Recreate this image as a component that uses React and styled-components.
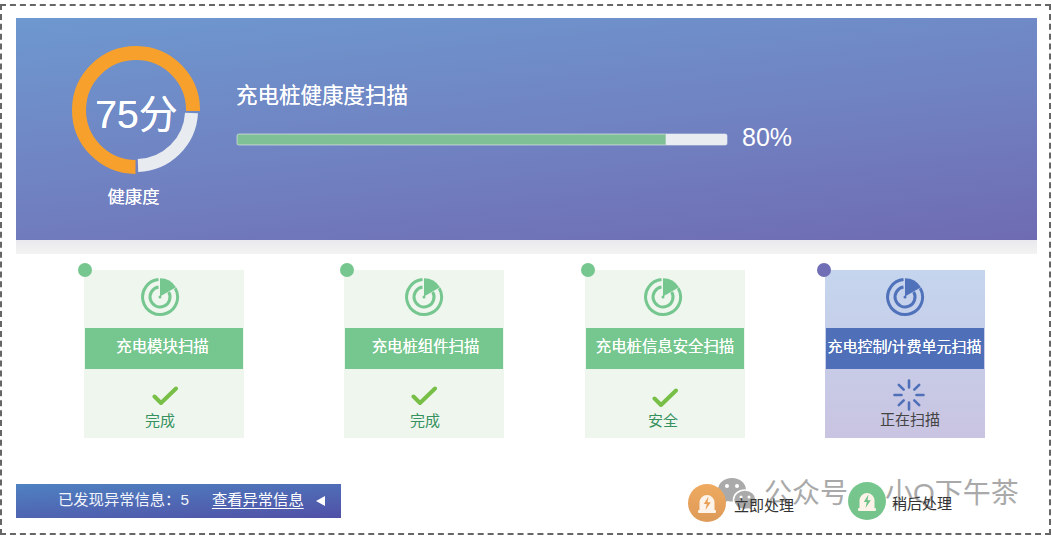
import React from "react"
import styled, { createGlobalStyle } from "styled-components"

const GlobalStyle = createGlobalStyle`
  html, body {
    margin: 0;
    padding: 0;
    background: #fff;
    overflow: hidden;
  }
  body {
    font-family: "Liberation Sans", "Noto Sans CJK SC", sans-serif;
  }
`

const Frame = styled.div`
  position: relative;
  box-sizing: border-box;
  width: 1051px;
  height: 531px;
  margin-top: 4px;
  padding: 12px 12px 0 14px;
  border: 2px dashed #666;
`

const Hero = styled.section`
  display: flex;
  box-sizing: border-box;
  height: 222px;
  padding: 28px 0 0 56px;
  background: linear-gradient(174deg, #6e98cf 0%, #7083c2 50%, #6f6bb2 100%);
`

const Gauge = styled.div`
  position: relative;
  width: 128px;
  flex: none;
`

const GaugeScore = styled.div`
  position: absolute;
  top: 42px;
  left: 0;
  width: 129px;
  text-align: center;
  color: #fff;
  font-size: 39px;
  line-height: 54px;
  text-shadow: 0 0 0.5px #fff;
`

const GaugeLabel = styled.div`
  margin-top: 9px;
  padding-right: 5px;
  text-align: center;
  color: #fff;
  font-size: 17.4px;
  line-height: 28px;
  text-shadow: 0 0 0.5px #fff;
`

const ScanPanel = styled.div`
  margin: 35px 0 0 36px;
`

const ScanTitle = styled.div`
  color: #fff;
  font-size: 21.5px;
  line-height: 30px;
  text-shadow: 0 0 0.6px #fff;
`

const ProgressRow = styled.div`
  display: flex;
  align-items: center;
  height: 28px;
  margin-top: 14px;
  padding-left: 1px;
`

const ProgressTrack = styled.div`
  box-sizing: border-box;
  width: 490px;
  height: 11px;
  border-radius: 2px;
  background: #e9edf1;
  box-shadow: 0 0 0 0.5px #b9c3dc;
  overflow: hidden;
`

const ProgressFill = styled.div`
  box-sizing: border-box;
  height: 100%;
  background: #7fc096;
  border: 1px solid #a5cdb4;
`

const ProgressValue = styled.div`
  margin: 0 0 4px 15px;
  color: #fff;
  font-size: 25px;
`

const Strip = styled.div`
  height: 14px;
  background: linear-gradient(#e9e9ee, #f3f3f3);
`

const CardRow = styled.div`
  display: flex;
  padding-top: 16px;
`

const Card = styled.article`
  position: relative;
  display: flex;
  flex-direction: column;
  align-items: center;
  box-sizing: border-box;
  width: 160px;
  height: 168px;
  margin-left: ${p => p.$offset}px;
  padding: 0 1px;
  background: ${p => (p.$active ? "linear-gradient(#c5d5ee, #c9c4e1)" : "#eff6ee")};
`

const CardDot = styled.span`
  position: absolute;
  top: -7px;
  left: ${p => p.$left}px;
  width: 14px;
  height: 14px;
  border-radius: 50%;
  background: ${p => (p.$active ? "#706fb5" : "#76c78f")};
`

const RadarIcon = styled.svg`
  display: block;
  flex: none;
  width: 40px;
  height: 40px;
  margin-top: 7px;
  margin-left: ${p => p.$shift * 2}px;
  color: ${p => (p.$active ? "#4f72bb" : "#76c78f")};
`

const CardBanner = styled.div`
  box-sizing: border-box;
  width: 100%;
  height: 41px;
  margin-top: 11px;
  padding-left: ${p => (p.$shift > 0 ? p.$shift * 2 : 0)}px;
  padding-right: ${p => (p.$shift < 0 ? -p.$shift * 2 : 0)}px;
  background: ${p => (p.$active ? "#4f70b8" : "#76c78f")};
  color: #fff;
  font-size: ${p => (p.$small ? "15px" : "15.4px")};
  line-height: 38px;
  text-align: center;
  white-space: nowrap;
  text-shadow: 0 0 0.6px #fff;
`

const StatusIcon = styled.svg`
  display: block;
  flex: none;
  margin-top: ${p => p.$top}px;
  margin-left: ${p => p.$shift * 2}px;
`

const StatusText = styled.div`
  margin-top: ${p => p.$top}px;
  margin-left: ${p => p.$shift * 2}px;
  color: ${p => (p.$active ? "#444" : "#35925f")};
  font-size: 15px;
  line-height: 20px;
`

const Footer = styled.footer`
  position: relative;
  display: flex;
  justify-content: space-between;
  margin-top: 46px;
`

const AlertBar = styled.div`
  display: flex;
  align-items: center;
  box-sizing: border-box;
  width: 325px;
  height: 34px;
  padding: 0 0 7px 42px;
  background: linear-gradient(176deg, #4f82c2, #5050a6);
  color: #f2f5fb;
  font-size: 15.3px;
`

const AlertLink = styled.a`
  margin-left: 23px;
  color: #fff;
  text-decoration: underline;
  text-underline-offset: 3px;
`

const AlertArrow = styled.span`
  width: 0;
  height: 0;
  margin: 7px 0 0 12px;
  border-top: 5px solid transparent;
  border-bottom: 5px solid transparent;
  border-right: 9px solid #fff;
`

const Watermark = styled.div`
  position: absolute;
  top: -7px;
  left: 701px;
  display: flex;
  align-items: center;
  gap: 7px;
  color: #a9a9a9;
  font-size: 28px;
  line-height: 34px;
  word-spacing: 6px;
  white-space: nowrap;
`

const Actions = styled.div`
  position: relative;
  z-index: 1;
  display: flex;
  padding-right: 85px;
`

const ActionItem = styled.div`
  display: flex;
  align-items: center;
  height: 38px;
  margin-top: ${p => p.$top}px;
  margin-left: ${p => p.$left}px;
`

const ActionBadge = styled.svg`
  display: block;
  flex: none;
  width: 38px;
  height: 38px;
`

const ActionText = styled.span`
  margin: 2px 0 0 ${p => p.$gap}px;
  color: #333;
  font-size: 15px;
`

const Radar = ({ active, shift }) => (
  <RadarIcon viewBox="0 0 40 40" $active={active} $shift={shift} fill="none" stroke="currentColor" strokeWidth="3">
    <path d="M35.2 11.2A17.5 17.5 0 1 1 18.5 2.6" />
    <path d="M28.7 15A10 10 0 1 1 18.5 10.1" />
    <path d="M20 19.5V1.2A19 19 0 0 1 36 10.2Z" fill="currentColor" stroke="none" />
    <circle cx="20" cy="20" r="1.5" fill="currentColor" stroke="none" />
  </RadarIcon>
)

const Check = ({ top, shift }) => (
  <StatusIcon $top={top} $shift={shift} width="26" height="20" viewBox="0 0 26 20" fill="none" stroke="#78bf47" strokeWidth="4" strokeLinecap="round" strokeLinejoin="round">
    <path d="M2.5 10.5L9 17L24 2.5" />
  </StatusIcon>
)

const Spinner = ({ top, shift }) => (
  <StatusIcon $top={top} $shift={shift} width="32" height="32" viewBox="0 0 32 32" stroke="#4f70b8" strokeWidth="2.6" strokeLinecap="round">
    <path d="M16 1.5V8.5M16 23.5V30.5M1.5 16H8.5M23.5 16H30.5M5.8 5.8L10.7 10.7M21.3 21.3L26.2 26.2M26.2 5.8L21.3 10.7M10.7 21.3L5.8 26.2" />
  </StatusIcon>
)

const Alarm = ({ from, to, bolt }) => (
  <ActionBadge viewBox="0 0 38 38">
    <defs>
      <linearGradient id={`badge-${bolt}`} x1="0" y1="0" x2="0" y2="1">
        <stop offset="0" stopColor={from} />
        <stop offset="1" stopColor={to} />
      </linearGradient>
    </defs>
    <circle cx="19" cy="19" r="19" fill={`url(#badge-${bolt})`} />
    <path d="M11.5 26.500V18.500a7.500 7.500 0 0 1 15 0V26.500Z" fill="#fdf3e8" />
    <rect x="10" y="26" width="18" height="3" rx="1" fill="#fdf3e8" />
    <path d="M20.500 12.500L15.800 20H18.800L17.500 26L22.800 18.300H19.500Z" fill={bolt} />
  </ActionBadge>
)

const scans = [
  { title: "充电模块扫描", status: "完成", offset: 68, dot: -6, radar: -4, banner: -1.5, icon: 1, iconTop: 17, text: -4, textTop: 5 },
  { title: "充电桩组件扫描", status: "完成", offset: 100, dot: -4, radar: 0, banner: 1.5, icon: 0, iconTop: 17, text: 1, textTop: 5 },
  { title: "充电桩信息安全扫描", status: "安全", offset: 81, dot: -4, radar: -2, banner: 0, icon: 0, iconTop: 19, text: -2, textTop: 3 },
  { title: "充电控制/计费单元扫描", status: "正在扫描", offset: 80, dot: -8, radar: 0, banner: -0.5, icon: 4, iconTop: 10, text: 5, textTop: -1, active: true, small: true }
]

const App = () => {
  const progress = 80
  return (
    <>
      <GlobalStyle />
      <Frame>
        <Hero>
          <Gauge>
            <svg width="128" height="128" viewBox="0 0 128 128" style={{ display: "block" }}>
              <path d="M121 65A57 57 0 1 0 63.500 121" fill="none" stroke="#f7a12c" strokeWidth="14" />
              <path d="M119.500 67A55.500 55.500 0 0 1 66 119.500" fill="none" stroke="#e8ebf0" strokeWidth="13" />
            </svg>
            <GaugeScore>75分</GaugeScore>
            <GaugeLabel>健康度</GaugeLabel>
          </Gauge>
          <ScanPanel>
            <ScanTitle>充电桩健康度扫描</ScanTitle>
            <ProgressRow>
              <ProgressTrack>
                <ProgressFill style={{ width: `${(progress / 80) * 87.5}%` }} />
              </ProgressTrack>
              <ProgressValue>{progress}%</ProgressValue>
            </ProgressRow>
          </ScanPanel>
        </Hero>
        <Strip />
        <CardRow>
          {scans.map(scan => (
            <Card key={scan.title} $offset={scan.offset} $active={scan.active}>
              <CardDot $active={scan.active} $left={scan.dot} />
              <Radar active={scan.active} shift={scan.radar} />
              <CardBanner $active={scan.active} $small={scan.small} $shift={scan.banner}>{scan.title}</CardBanner>
              {scan.active ? <Spinner top={scan.iconTop} shift={scan.icon} /> : <Check top={scan.iconTop} shift={scan.icon} />}
              <StatusText $active={scan.active} $top={scan.textTop} $shift={scan.text}>{scan.status}</StatusText>
            </Card>
          ))}
        </CardRow>
        <Footer>
          <AlertBar>
            已发现异常信息：5
            <AlertLink>查看异常信息</AlertLink>
            <AlertArrow />
          </AlertBar>
          <Watermark>
            <svg width="40" height="34" viewBox="0 0 40 34">
              <path d="M15 1C7 1 1 6 1 13c0 4 2 7 5 9l-1.500 5 6-3c1.500.4 3 .6 4.500.6C23 24.600 29 19 29 13 29 6 23 1 15 1Z" fill="#aaa" />
              <path d="M28 13c-6.500 0-11.500 4.300-11.500 9.800S21.500 32.500 28 32.500c1.300 0 2.500-.2 3.600-.5l4.400 2-1-4c2.500-1.800 4-4.300 4-7.200C39 17.300 34.500 13 28 13Z" fill="#aaa" stroke="#fff" strokeWidth="1.500" />
              <circle cx="10" cy="9" r="2" fill="#fff" />
              <circle cx="20" cy="9" r="2" fill="#fff" />
              <circle cx="24" cy="20" r="1.500" fill="#fff" />
              <circle cx="32" cy="20" r="1.500" fill="#fff" />
            </svg>
            <span>公众号 · 小Q下午茶</span>
          </Watermark>
          <Actions>
            <ActionItem $top={0} $left={0}>
              <Alarm from="#f0aa60" to="#dd9a58" bolt="#e89f55" />
              <ActionText $gap={8}>立即处理</ActionText>
            </ActionItem>
            <ActionItem $top={-2} $left={54}>
              <Alarm from="#76c78f" to="#74c38b" bolt="#6cc088" />
              <ActionText $gap={6}>稍后处理</ActionText>
            </ActionItem>
          </Actions>
        </Footer>
      </Frame>
    </>
  )
}

export default App
